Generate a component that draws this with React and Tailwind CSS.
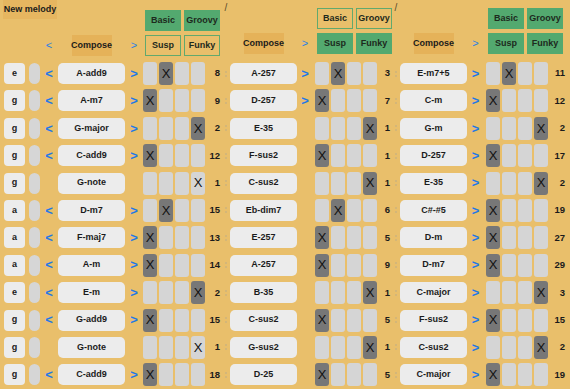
import React from "react";

const col1 = [
  { n: "e", c: "A-add9", a: true, x: 1, v: 8 },
  { n: "g", c: "A-m7", a: true, x: 0, v: 9 },
  { n: "g", c: "G-major", a: true, x: 3, v: 2 },
  { n: "g", c: "C-add9", a: true, x: 0, v: 12 },
  { n: "g", c: "G-note", a: false, x: 3, light: true, v: 1 },
  { n: "a", c: "D-m7", a: true, x: 1, v: 15 },
  { n: "a", c: "F-maj7", a: true, x: 0, v: 13 },
  { n: "a", c: "A-m", a: true, x: 0, v: 14 },
  { n: "e", c: "E-m", a: true, x: 3, v: 2 },
  { n: "g", c: "G-add9", a: true, x: 0, v: 15 },
  { n: "g", c: "G-note", a: false, x: 3, light: true, v: 1 },
  { n: "g", c: "C-add9", a: true, x: 0, v: 18 },
];

const col2 = [
  { c: "A-257", a: true, x: 1, v: 3 },
  { c: "D-257", a: true, x: 0, v: 7 },
  { c: "E-35", a: false, x: 3, v: 1 },
  { c: "F-sus2", a: false, x: 0, v: 1 },
  { c: "C-sus2", a: false, x: 3, v: 1 },
  { c: "Eb-dim7", a: false, x: 1, v: 6 },
  { c: "E-257", a: false, x: 0, v: 5 },
  { c: "A-257", a: false, x: 0, v: 9 },
  { c: "B-35", a: false, x: 3, v: 1 },
  { c: "C-sus2", a: false, x: 0, v: 5 },
  { c: "G-sus2", a: false, x: 3, v: 1 },
  { c: "D-25", a: false, x: 0, v: 5 },
];

const col3 = [
  { c: "E-m7+5", x: 1, v: 11 },
  { c: "C-m", x: 0, v: 12 },
  { c: "G-m", x: 3, v: 2 },
  { c: "D-257", x: 0, v: 17 },
  { c: "E-35", x: 3, v: 2 },
  { c: "C#-#5", x: 0, v: 19 },
  { c: "D-m", x: 0, v: 27 },
  { c: "D-m7", x: 0, v: 29 },
  { c: "C-major", x: 3, v: 3 },
  { c: "F-sus2", x: 0, v: 15 },
  { c: "C-sus2", x: 3, v: 2 },
  { c: "C-major", x: 0, v: 19 },
];

function Cells({ x, light }) {
  return (
    <div className="flex gap-[2px]">
      {[0, 1, 2, 3].map((i) => {
        const on = i === x;
        const dark = on && !light;
        return (
          <div
            key={i}
            className={
              "w-[14px] h-[23px] rounded-[3px] flex items-center justify-center text-[13px] font-normal text-[#111] " +
              (dark ? "bg-[#777777]" : "bg-[#d5d5d5]")
            }
          >
            {on ? "X" : ""}
          </div>
        );
      })}
    </div>
  );
}

function Chord({ c }) {
  return (
    <div className="w-[67px] h-[21px] rounded-[5px] bg-[#ececec] flex items-center justify-center text-[9px] font-bold text-[#1b1b1b]">
      {c}
    </div>
  );
}

function Arrow({ ch, show, w }) {
  return (
    <div className={"flex items-center justify-center text-[13px] font-bold text-[#1f78e6] h-[23px] " + w}>
      {show ? ch : ""}
    </div>
  );
}

function Btn({ label, green }) {
  return (
    <div
      className={
        "w-[36px] h-[21px] flex items-center justify-center text-[9px] font-bold text-[#1d2a1d] " +
        (green ? "bg-[#53a96f]" : "border-[1.5px] border-[#62a96d]")
      }
    >
      {label}
    </div>
  );
}

function Buttons({ basicGreen, suspGreen }) {
  return (
    <div className="grid grid-cols-[36px_36px] gap-x-[3px] gap-y-[4px]">
      <Btn label="Basic" green={basicGreen} />
      <Btn label="Groovy" green={basicGreen} />
      <Btn label="Susp" green={suspGreen} />
      <Btn label="Funky" green={suspGreen} />
    </div>
  );
}

function Compose() {
  return (
    <div className="w-[40px] h-[21px] bg-[#e5b259] flex items-center justify-center text-[9px] font-bold text-[#1b1b1b]">
      Compose
    </div>
  );
}

function HeadArrow({ ch, w }) {
  return (
    <div className={"flex items-center justify-center text-[11px] text-[#2b7fe2] h-[21px] " + w}>{ch}</div>
  );
}

function Num({ v, w }) {
  return (
    <div className={"text-right text-[9.5px] font-bold text-[#1b1b1b] " + w}>{v}</div>
  );
}

function Sep({ first }) {
  return (
    <div className="w-[8px] flex flex-col">
      <div className="h-[62px] flex justify-center">
        <span className="text-[10px] leading-none mt-[3px] text-[#5a4a2c]">/</span>
      </div>
      <div className="flex flex-col gap-[4.4px]">
        {col1.map((_, i) => (
          <div key={i} className="h-[23px] flex flex-col items-center justify-center gap-[2px]">
            <div className="w-[2px] h-[2px] rounded-full bg-[#cdb37c]" />
            <div className="w-[2px] h-[2px] rounded-full bg-[#cdb37c]" />
          </div>
        ))}
      </div>
    </div>
  );
}

export default function App() {
  return (
    <div className="w-[570px] h-[389px] bg-[#e9bf6b] overflow-hidden font-['Liberation_Sans',Arial,sans-serif] flex">
      {/* section 1 */}
      <div className="w-[222px] flex flex-col">
        <div className="h-[62px] flex">
          <div className="w-[143px] flex flex-col">
            <div className="ml-[3px] w-[54px] h-[19px] bg-[#e6b660] flex items-center justify-center text-[9px] font-bold text-[#1b1b1b]">
              New melody
            </div>
            <div className="mt-[16px] flex">
              <div className="w-[40px]" />
              <HeadArrow ch="<" w="w-[18px]" />
              <div className="w-[67px] flex justify-center">
                <Compose />
              </div>
              <HeadArrow ch=">" w="w-[18px]" />
            </div>
          </div>
          <div className="pt-[10px] pl-[2px]">
            <Buttons basicGreen suspGreen={false} />
          </div>
        </div>
        <div className="flex flex-col gap-[4.4px]">
          {col1.map((r, i) => (
            <div key={i} className="flex items-center h-[23px]">
              <div className="ml-[4px] w-[21px] h-[21px] rounded-[4px] bg-[#ececec] flex items-center justify-center text-[9px] font-bold text-[#1b1b1b]">
                {r.n}
              </div>
              <div className="ml-[4px] w-[11px] h-[21px] rounded-full bg-[#d6d6d6]" />
              <Arrow ch="<" show={r.a} w="w-[18px]" />
              <Chord c={r.c} />
              <Arrow ch=">" show={r.a} w="w-[18px]" />
              <Cells x={r.x} light={r.light} />
              <Num v={r.v} w="w-[15px]" />
            </div>
          ))}
        </div>
      </div>

      <Sep />

      {/* section 2 */}
      <div className="w-[162px] flex flex-col">
        <div className="h-[62px] flex">
          <div className="w-[67px] flex justify-center pt-[33px]">
            <Compose />
          </div>
          <div className="pt-[33px]">
            <HeadArrow ch=">" w="w-[16px]" />
          </div>
          <div className="pt-[8px] pl-[4px]">
            <Buttons basicGreen={false} suspGreen />
          </div>
        </div>
        <div className="flex flex-col gap-[4.4px]">
          {col2.map((r, i) => (
            <div key={i} className="flex items-center h-[23px]">
              <Chord c={r.c} />
              <Arrow ch=">" show={r.a} w="w-[16px]" />
              <div className="ml-[2px]">
                <Cells x={r.x} />
              </div>
              <Num v={r.v} w="w-[13px]" />
            </div>
          ))}
        </div>
      </div>

      <Sep />

      {/* section 3 */}
      <div className="w-[167px] flex flex-col">
        <div className="h-[62px] flex">
          <div className="w-[67px] flex justify-center pt-[33px]">
            <Compose />
          </div>
          <div className="pt-[33px]">
            <HeadArrow ch=">" w="w-[17px]" />
          </div>
          <div className="pt-[8px] pl-[4px]">
            <Buttons basicGreen suspGreen />
          </div>
        </div>
        <div className="flex flex-col gap-[4.4px]">
          {col3.map((r, i) => (
            <div key={i} className="flex items-center h-[23px]">
              <Chord c={r.c} />
              <Arrow ch=">" show w="w-[17px]" />
              <div className="ml-[2px]">
                <Cells x={r.x} />
              </div>
              <Num v={r.v} w="w-[17px]" />
            </div>
          ))}
        </div>
      </div>
    </div>
  );
}
